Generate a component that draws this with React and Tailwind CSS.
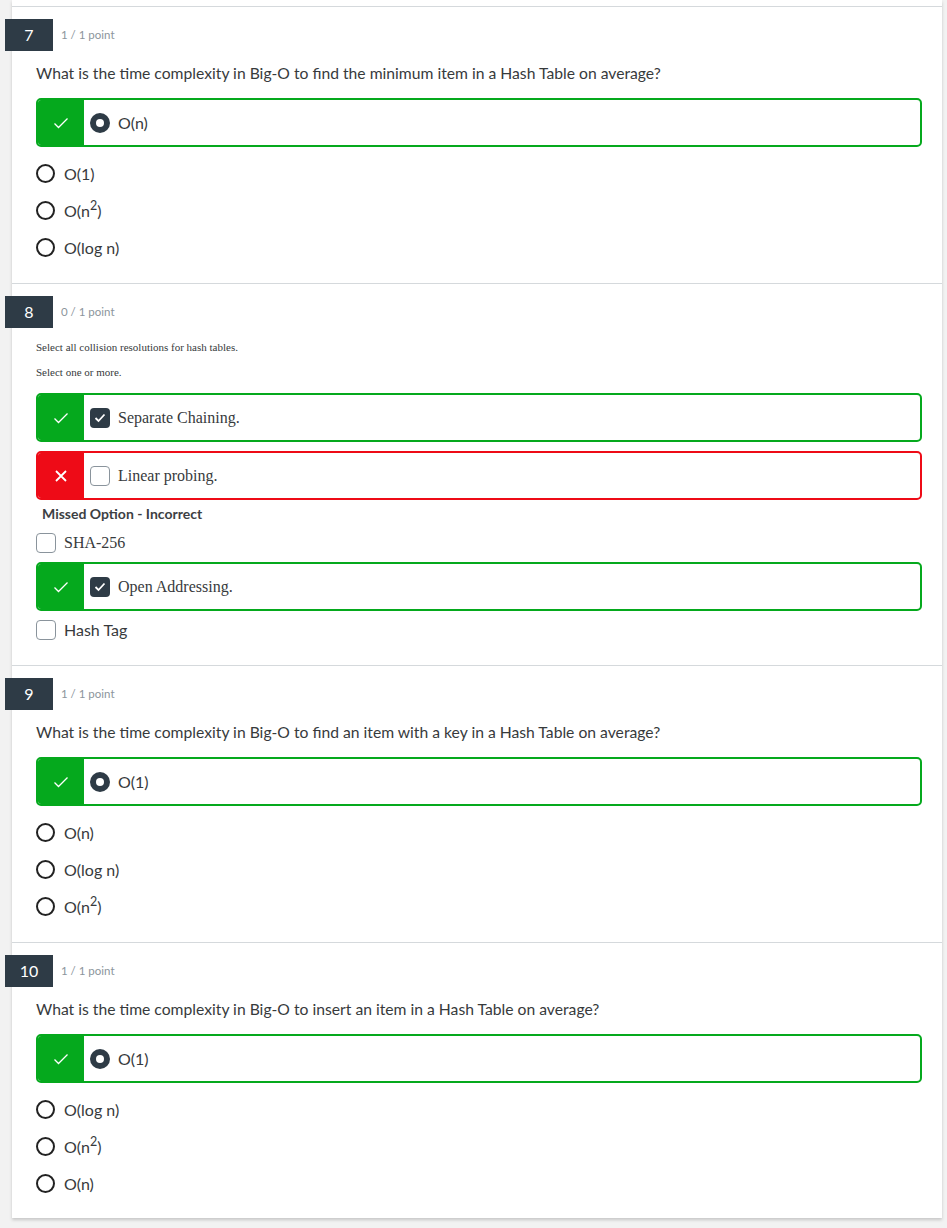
import React from "react";

const GREEN = "bg-[#05a91d]";

function Check({ className = "" }) {
  return (
    <svg width="16" height="12" viewBox="0 0 16 12" className={className}>
      <polyline points="1.5,6.5 5.5,10.5 14.5,1.5" fill="none" stroke="white" strokeWidth="1.3" />
    </svg>
  );
}

function Cross() {
  return (
    <svg width="12" height="12" viewBox="0 0 12 12">
      <path d="M1 1 L11 11 M11 1 L1 11" stroke="white" strokeWidth="1.8" fill="none" />
    </svg>
  );
}

function Header({ num, points }) {
  return (
    <div className="flex items-center gap-2 -ml-[7px]">
      <div className="w-12 h-8 bg-[#2e3b46] text-white flex items-center justify-center text-[16px]">{num}</div>
      <span className="text-[11.5px] text-[#8c959c]">{points}</span>
    </div>
  );
}

function Radio() {
  return <span className="w-[19px] h-[19px] rounded-full border-2 border-[#222] bg-white shrink-0" />;
}

function RadioChecked() {
  return (
    <span className="w-5 h-5 rounded-full bg-[#2e3b46] flex items-center justify-center shrink-0">
      <span className="w-2 h-2 rounded-full bg-white" />
    </span>
  );
}

function Box({ checked }) {
  if (checked)
    return (
      <span className="w-5 h-5 rounded-[4px] bg-[#2e3b46] flex items-center justify-center shrink-0">
        <svg width="12" height="10" viewBox="0 0 12 10">
          <polyline points="1.5,5 4.5,8 10.5,1.5" fill="none" stroke="white" strokeWidth="1.8" />
        </svg>
      </span>
    );
  return <span className="w-5 h-5 rounded-[4px] border border-[#8a949c] bg-white shrink-0" />;
}

function Marked({ wrong, children }) {
  const color = wrong ? "border-[#ee0b17]" : "border-[#05a91d]";
  const fill = wrong ? "bg-[#ee0b17]" : GREEN;
  return (
    <div className={`flex h-[49px] border-2 ${color} rounded-[5px] overflow-hidden`}>
      <div className={`w-[46px] ${fill} flex items-center justify-center`}>{wrong ? <Cross /> : <Check />}</div>
      <div className="flex items-center gap-2 pl-[6px]">{children}</div>
    </div>
  );
}

function Sup({ text }) {
  if (text !== "O(n2)") return text;
  return (
    <>
      O(n<sup className="text-[12.5px] leading-none">2</sup>)
    </>
  );
}

function RadioQuestion({ num, question, answer, others, last }) {
  return (
    <section className={`border-t border-[#d5d9dc] pt-3 ${last ? "pb-[16px]" : "pb-[17px]"}`}>
      <Header num={num} points="1 / 1 point" />
      <div className="pl-6 pr-5">
        <p className="mt-[10px] text-[15.7px] leading-6 text-[#373a3c]">{question}</p>
        <div className="mt-[13px]">
          <Marked>
            <RadioChecked />
            <span className="text-[16px] text-[#373a3c]">{answer}</span>
          </Marked>
        </div>
        <div className="mt-[8px]">
          {others.map((o) => (
            <div key={o} className="h-[37px] flex items-center gap-[9px]">
              <Radio />
              <span className="text-[16px] text-[#373a3c]">
                <Sup text={o} />
              </span>
            </div>
          ))}
        </div>
      </div>
    </section>
  );
}

export default function App() {
  const serif = { fontFamily: '"Liberation Serif", serif' };
  return (
    <div className="min-h-screen bg-[#f2f2f2] pl-3 pr-[5px]" style={{ fontFamily: "Lato, sans-serif" }}>
      <div className="w-[930px] bg-white pt-[6px] shadow-[0_2px_3px_rgba(0,0,0,0.18)]">
        <RadioQuestion
          num="7"
          question="What is the time complexity in Big-O to find the minimum item in a Hash Table on average?"
          answer="O(n)"
          others={["O(1)", "O(n2)", "O(log n)"]}
        />

        <section className="border-t border-[#d5d9dc] pt-3 pb-[17px]">
          <Header num="8" points="0 / 1 point" />
          <div className="pl-6 pr-5 text-[#373a3c]">
            <p className="mt-[12px] text-[11px] leading-[14px]" style={serif}>
              Select all collision resolutions for hash tables.
            </p>
            <p className="mt-[11px] text-[11px] leading-[14px]" style={serif}>
              Select one or more.
            </p>
            <div className="mt-[14px] flex flex-col gap-[9px]">
              <Marked>
                <Box checked />
                <span className="text-[16px]" style={serif}>Separate Chaining.</span>
              </Marked>
              <Marked wrong>
                <Box />
                <span className="text-[16px]" style={serif}>Linear probing.</span>
              </Marked>
            </div>
            <p className="mt-[4px] pl-[6px] text-[14px] leading-[20px] font-bold text-[#3c4043]">Missed Option - Incorrect</p>
            <div className="h-[38px] flex items-center gap-2">
              <Box />
              <span className="text-[16px]" style={serif}>SHA-256</span>
            </div>
            <Marked>
              <Box checked />
              <span className="text-[16px]" style={serif}>Open Addressing.</span>
            </Marked>
            <div className="h-[37px] flex items-center gap-2">
              <Box />
              <span className="text-[16px]">Hash Tag</span>
            </div>
          </div>
        </section>

        <RadioQuestion
          num="9"
          question="What is the time complexity in Big-O to find an item with a key in a Hash Table on average?"
          answer="O(1)"
          others={["O(n)", "O(log n)", "O(n2)"]}
        />
        <RadioQuestion
          num="10"
          question="What is the time complexity in Big-O to insert an item in a Hash Table on average?"
          answer="O(1)"
          others={["O(log n)", "O(n2)", "O(n)"]}
          last
        />
      </div>
    </div>
  );
}
